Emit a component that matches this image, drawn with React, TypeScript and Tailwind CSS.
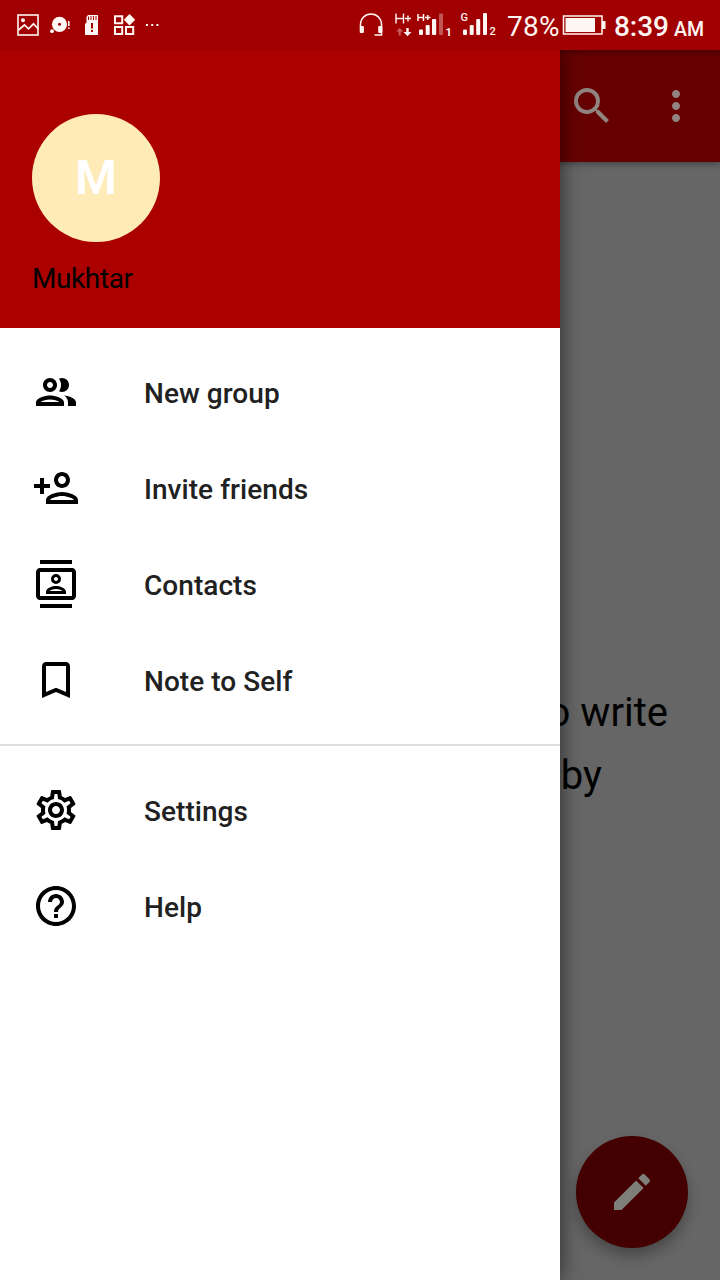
import type { IconType } from 'react-icons';
import {
    MdBookmarkBorder,
    MdEdit,
    MdHelpOutline,
    MdMoreVert,
    MdOutlineContacts,
    MdOutlineGroup,
    MdOutlinePersonAdd,
    MdOutlineSettings,
    MdSearch,
} from 'react-icons/md';

const mainItems = [
    { label: 'New group', icon: MdOutlineGroup },
    { label: 'Invite friends', icon: MdOutlinePersonAdd },
    { label: 'Contacts', icon: MdOutlineContacts },
    { label: 'Note to Self', icon: MdBookmarkBorder },
];

const extraItems = [
    { label: 'Settings', icon: MdOutlineSettings },
    { label: 'Help', icon: MdHelpOutline },
];

function MenuItem({ label, icon: Icon }: { label: string; icon: IconType }) {
    return (
        <button className="flex h-24 w-full items-center gap-16 px-8 text-left">
            <Icon className="h-12 w-12 text-black" />
            <span className="pt-1 text-[28px] font-medium leading-8 tracking-[0.05px] text-[#212121]">{label}</span>
        </button>
    );
}

function StatusBar() {
    return (
        <div className="flex h-[50px] shrink-0 items-center justify-between bg-[#a10000] text-[#fff7f3]">
            {/* Notifications */}
            <svg className="h-[50px] w-[170px]" viewBox="0 0 170 50" fill="currentColor">
                <rect x="18" y="15" width="20" height="20" fill="none" stroke="currentColor" strokeWidth="1.6" />
                <circle cx="23" cy="20.3" r="2" />
                <path d="M18.5 30l6-5 4 3.8 5-5 4.5 5" fill="none" stroke="currentColor" strokeWidth="1.7" />
                <circle cx="59.5" cy="24.3" r="7.6" />
                <circle cx="59.5" cy="24.3" r="1.5" fill="#a10000" />
                <circle cx="52" cy="31.2" r="1.9" />
                <path d="M68 21h1.6v5H68zM68 27.5h1.6v1.6H68z" />
                <path d="M88 15h10v20H85V24l1.5-1.5V17z" />
                <path d="M88.500 16.5v3.5M91 16v4M93.5 16v4M96 16v4" stroke="#a10000" strokeWidth="1" />
                <path d="M91 23h2v5.5h-2zM91 30h2v2h-2z" fill="#a10000" />
                <path d="M115 16.2h7.2v7h-7.2zM115 27h7.2v7h-7.2zM126 27h7.2v7H126z" fill="none" stroke="currentColor" strokeWidth="2" />
                <path d="M129.500 14l5.700 5.700-5.700 5.700-5.700-5.700z" />
                <path d="M146 24h2v2h-2zM151.2 24h2v2h-2zM156.4 24h2v2h-2z" />
            </svg>

            <div className="flex items-center">
                {/* Headset, data and signal strength */}
                <svg className="h-[50px] w-[147px]" viewBox="357 0 147 50" fill="currentColor" fontFamily="Roboto, sans-serif">
                    <path d="M360.500 27v-2.500a10.500 10.500 0 0 1 21 0V35h-7" fill="none" stroke="currentColor" strokeWidth="1.5" />
                    <rect x="359.7" y="26" width="4.2" height="7" rx="1" />
                    <rect x="378.2" y="26" width="4.2" height="7" rx="1" />
                    <path d="M396 13.5v10M403.5 13.5v10M396 18.5h7.5M405 18.5h6M408 15.5v6" fill="none" stroke="currentColor" strokeWidth="1.4" />
                    <path d="M396.200 31.500l3.500-3.500 3.500 3.500h-2.500V35.500h-2v-4z" opacity=".4" />
                    <path d="M403.500 32l4 4.300 4-4.300h-2.800V28h-2.400v4z" />
                    <path d="M418 14v7M423.5 14v7M418 17.5h5.5M425 17.5h5.5M427.7 15v5" fill="none" stroke="currentColor" strokeWidth="1.5" />
                    <rect x="419" y="29.5" width="4" height="5.5" rx="1" />
                    <rect x="425.7" y="25" width="4" height="10" rx="1" />
                    <rect x="432" y="19" width="4.2" height="16" rx="1" />
                    <rect x="439" y="13.5" width="4" height="21.5" rx="1" opacity=".35" />
                    <text x="445.5" y="36" fontSize="11" fontWeight="700">1</text>
                    <text x="460.5" y="21" fontSize="11" fontWeight="500">G</text>
                    <rect x="463" y="29.5" width="4" height="5.5" rx="1" />
                    <rect x="469.7" y="25" width="4" height="10" rx="1" />
                    <rect x="476.2" y="19" width="4" height="16" rx="1" />
                    <rect x="483" y="13" width="4" height="22" rx="1" />
                    <text x="489.5" y="35" fontSize="11" fontWeight="500">2</text>
                </svg>
                <span className="ml-[3px] w-[54px] pt-1 text-[28px] leading-8 tracking-[0.3px]">78%</span>
                <svg className="h-[50px] w-[46px]" viewBox="561 0 46 50" fill="currentColor">
                    <rect x="563.5" y="16" width="38.5" height="18" fill="none" stroke="currentColor" strokeWidth="1.5" />
                    <rect x="565.5" y="18" width="29.5" height="14" />
                    <rect x="602" y="21" width="3.5" height="8" />
                </svg>
                <span className="ml-[7px] mr-4 flex items-baseline gap-[5px] pt-1.5 font-medium leading-8">
                    <span className="text-[28px]">8:39</span>
                    <span className="text-[19.5px]">AM</span>
                </span>
            </div>
        </div>
    );
}

function Conversations() {
    return (
        <div className="flex h-full flex-col bg-[#666666]">
            <header className="flex h-28 shrink-0 items-center justify-end gap-9 bg-[#660000] pr-5 text-[#918480] shadow-[0_2px_6px_rgba(0,0,0,0.35),inset_0_5px_4px_-2px_rgba(0,0,0,0.25)]">
                <MdSearch className="h-12 w-12" />
                <MdMoreVert className="h-12 w-12" />
            </header>
            <div className="flex flex-1 flex-col justify-between">
                <div className="pt-[519px] text-right text-[40px] leading-[63px] text-black">
                    <p className="pr-[52px]">to write</p>
                    <p className="pr-[118px]">by</p>
                </div>
                <button className="mb-8 mr-8 flex h-28 w-28 items-center justify-center self-end rounded-full bg-[#440000] text-[#7e7e7a] shadow-[0_8px_14px_rgba(0,0,0,0.3)]">
                    <MdEdit className="h-12 w-12" />
                </button>
            </div>
        </div>
    );
}

export default function App() {
    return (
        <div className="flex h-[1280px] w-[720px] flex-col overflow-hidden font-['Roboto',sans-serif]">
            <StatusBar />
            <div className="relative h-[1230px] overflow-hidden">
                <Conversations />

                {/* Navigation drawer */}
                <aside className="absolute inset-y-0 left-0 w-[560px] bg-white shadow-[0_0_20px_rgba(0,0,0,0.6)]">
                    <div className="h-[278px] bg-[#aa0000] px-8 pt-16">
                        <div className="flex h-32 w-32 items-center justify-center rounded-full bg-[#ffebb8] text-[48px] font-semibold text-white">
                            M
                        </div>
                        <div className="pt-[21px] text-[28px] leading-8 tracking-[-0.4px] text-black">Mukhtar</div>
                    </div>
                    <nav>
                        <div className="border-b-2 border-[#dedede] py-4">
                            {mainItems.map((item) => (
                                <MenuItem key={item.label} {...item} />
                            ))}
                        </div>
                        <div className="py-4">
                            {extraItems.map((item) => (
                                <MenuItem key={item.label} {...item} />
                            ))}
                        </div>
                    </nav>
                </aside>
            </div>
        </div>
    );
}
